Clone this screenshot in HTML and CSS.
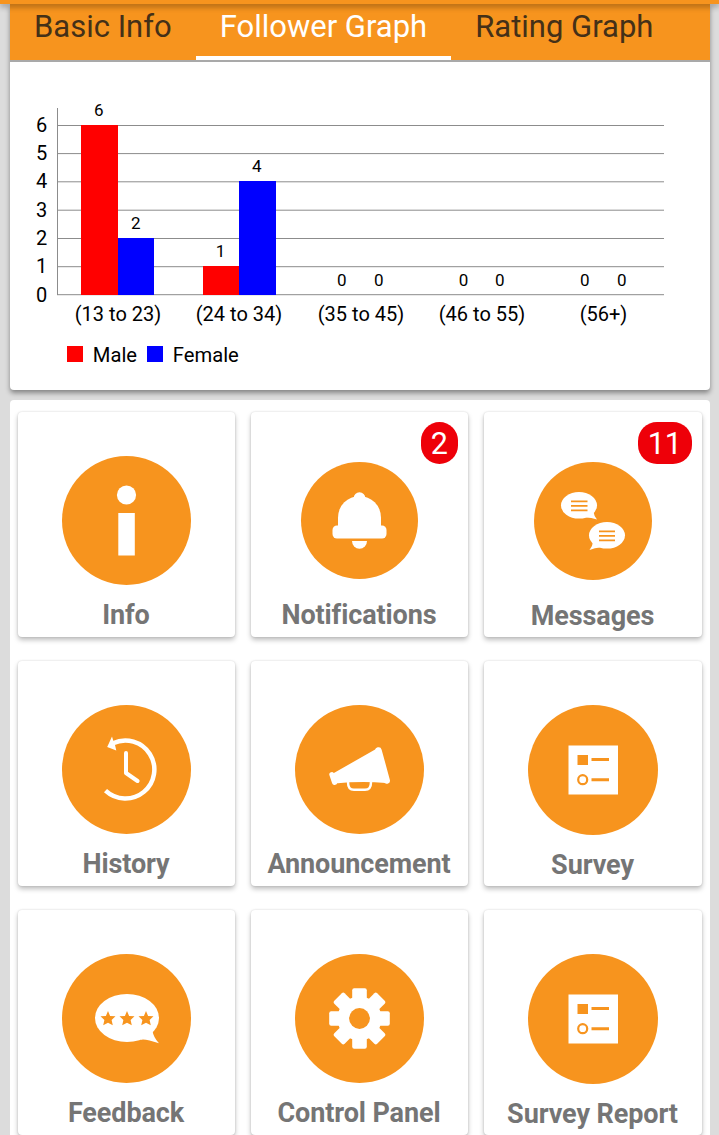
FILE: index.html
```html
<!DOCTYPE html>
<html lang="en">
<head>
    <meta charset="UTF-8">
    <meta name="viewport" content="width=device-width, initial-scale=1.0">
    <title>Dashboard</title>
    <link rel="stylesheet" href="styles.css">
</head>
<body>
    <div class="appbar"></div>
    <div class="card graph-card">
        <nav class="tabs">
            <a class="tab">Basic Info</a>
            <a class="tab active">Follower Graph</a>
            <a class="tab">Rating Graph</a>
        </nav>
        <svg class="chart" viewBox="10 62 700 328">
            <g class="grid-lines">
                <path d="M57 125.5H664M57 153.6H664M57 181.8H664M57 210.2H664M57 238.5H664M57 266.7H664"/>
                <path d="M57.5 108V295M57 294.7H664"/>
            </g>
            <g class="male">
                <rect x="81" y="125" width="37" height="170"/>
                <rect x="203" y="266" width="36" height="29"/>
                <rect x="67" y="346" width="16" height="16"/>
            </g>
            <g class="female">
                <rect x="118" y="238" width="36" height="57"/>
                <rect x="239" y="181" width="37" height="114"/>
                <rect x="147" y="346" width="16" height="16"/>
            </g>
            <g class="axis">
                <text x="47.3" y="131.5">6</text>
                <text x="47.3" y="159.5">5</text>
                <text x="47.3" y="187.5">4</text>
                <text x="47.3" y="216.5">3</text>
                <text x="47.3" y="244.5">2</text>
                <text x="47.3" y="272.5">1</text>
                <text x="47.3" y="301.5">0</text>
            </g>
            <g class="values">
                <text x="98.7" y="116">6</text>
                <text x="135.7" y="229">2</text>
                <text x="220.5" y="257">1</text>
                <text x="256.7" y="172">4</text>
                <text x="341.7" y="286">0</text>
                <text x="378.7" y="286">0</text>
                <text x="463.5" y="286">0</text>
                <text x="499.7" y="286">0</text>
                <text x="584.7" y="286">0</text>
                <text x="621.7" y="286">0</text>
            </g>
            <g class="groups">
                <text x="118" y="321">(13 to 23)</text>
                <text x="239" y="321">(24 to 34)</text>
                <text x="361" y="321">(35 to 45)</text>
                <text x="482" y="321">(46 to 55)</text>
                <text x="603.5" y="321">(56+)</text>
            </g>
            <g class="legend">
                <text x="92.8" y="362">Male</text>
                <text x="172.8" y="362">Female</text>
            </g>
        </svg>
    </div>

    <div class="card menu">
        <div class="tile">
            <svg class="icon" viewBox="0 0 130 130">
                <circle class="disc" cx="64.5" cy="64.5" r="64.5"/>
                <circle cx="64.5" cy="39" r="9.6"/>
                <rect x="56.3" y="57" width="16.5" height="42.5"/>
            </svg>
            <span class="label">Info</span>
        </div>
        <div class="tile">
            <span class="badge">2</span>
            <svg class="icon" viewBox="0 0 130 130">
                <circle class="disc" cx="64.5" cy="64.5" r="58.5"/>
                <circle cx="64.5" cy="42" r="5.8"/>
                <path d="M43 72V61.5a21.5 21.5 0 0 1 43 0V72z"/>
                <rect x="37.5" y="69.5" width="54" height="13" rx="4.5"/>
                <path d="M57 85h15a7.5 7.8 0 0 1-15 0z"/>
            </svg>
            <span class="label">Notifications</span>
        </div>
        <div class="tile">
            <span class="badge">11</span>
            <svg class="icon" viewBox="0 0 130 130">
                <circle class="disc" cx="65" cy="65" r="59"/>
                <ellipse cx="51" cy="49.3" rx="18" ry="13.3"/>
                <path d="M58 61.5Q63 61.5 69 63.5Q66 60 65.5 56z"/>
                <ellipse cx="79" cy="79.3" rx="18" ry="13.3"/>
                <path d="M72 91.5Q67 91.5 61.5 94Q64.5 90.5 65 86z"/>
                <path class="line" stroke-width="1.8" d="M43 45.3H59.5M43 49.9H59.5M43 54.3H59.5M71 75.3H87M71 79.9H87M71 84.3H87"/>
            </svg>
            <span class="label low">Messages</span>
        </div>

        <div class="tile">
            <svg class="icon" viewBox="0 0 130 130">
                <circle class="disc" cx="64.5" cy="64.5" r="64.5"/>
                <path class="stroke" stroke-width="4.5" d="M43.5 85.7A29 29 0 1 0 51 38.3"/>
                <path d="M45.2 42L50 31.5L51.5 36.5L53 40L54.3 45.5z"/>
                <path class="stroke round" stroke-width="4" d="M64 48V68L75.5 76"/>
            </svg>
            <span class="label">History</span>
        </div>
        <div class="tile">
            <svg class="icon" viewBox="0 0 130 130">
                <circle class="disc" cx="64.5" cy="64.5" r="64.5"/>
                <path d="M38 68.5L81 44L91 78Q66 76 40 78.5z"/>
                <path class="stroke round" stroke-width="5" d="M36.8 69.5L39.5 77.5"/>
                <path class="stroke round" stroke-width="6.5" d="M83.5 45.5L91.7 75.5"/>
                <path class="stroke" stroke-width="2.5" d="M53 77C53 83 55 84.8 59 84.8H70C74 84.8 76 83 76 77"/>
            </svg>
            <span class="label">Announcement</span>
        </div>
        <div class="tile">
            <svg class="icon" viewBox="0 0 130 130">
                <circle class="disc" cx="65" cy="65" r="65"/>
                <rect x="40.5" y="40.5" width="49.5" height="49"/>
                <rect class="disc" x="49.5" y="50" width="10.5" height="10"/>
                <circle class="line" stroke-width="2.2" cx="54.7" cy="74.7" r="4.5"/>
                <path class="line" stroke-width="3" d="M63.5 54.5H81M63.5 74.7H81"/>
            </svg>
            <span class="label low">Survey</span>
        </div>

        <div class="tile">
            <svg class="icon" viewBox="0 0 130 130">
                <defs>
                    <path id="star" d="M0-7.5L2.1-2.5L7.5-2.2L3.6 1.5L4.8 6.7L0 4.2L-4.8 6.7L-3.6 1.5L-7.5-2.2L-2.1-2.5z"/>
                </defs>
                <circle class="disc" cx="64.5" cy="64.5" r="64.5"/>
                <ellipse cx="65" cy="64" rx="32" ry="24"/>
                <path d="M78 86Q82 84 97 89.3Q91.5 83.5 90.5 77z"/>
                <use class="disc" href="#star" x="46" y="64.5"/>
                <use class="disc" href="#star" x="65" y="64.5"/>
                <use class="disc" href="#star" x="84" y="64.5"/>
            </svg>
            <span class="label">Feedback</span>
        </div>
        <div class="tile">
            <svg class="icon" viewBox="0 0 130 130">
                <defs>
                    <rect id="tooth" x="-7.3" y="-30.3" width="14.6" height="60.6" rx="2"/>
                </defs>
                <circle class="disc" cx="64.5" cy="64.5" r="64.5"/>
                <g transform="translate(64.5 64.5)">
                    <use href="#tooth"/>
                    <use href="#tooth" transform="rotate(45)"/>
                    <use href="#tooth" transform="rotate(90)"/>
                    <use href="#tooth" transform="rotate(135)"/>
                    <circle r="22"/>
                    <circle class="disc" r="10.4"/>
                </g>
            </svg>
            <span class="label">Control Panel</span>
        </div>
        <div class="tile">
            <svg class="icon" viewBox="0 0 130 130">
                <circle class="disc" cx="65" cy="65" r="65"/>
                <rect x="40.5" y="40.5" width="49.5" height="49"/>
                <rect class="disc" x="49.5" y="50" width="10.5" height="10"/>
                <circle class="line" stroke-width="2.2" cx="54.7" cy="74.7" r="4.5"/>
                <path class="line" stroke-width="3" d="M63.5 54.5H81M63.5 74.7H81"/>
            </svg>
            <span class="label low">Survey Report</span>
        </div>
    </div>
</body>
</html>
```

FILE: styles.css
```css
body {
    margin: 0;
    height: 1135px;
    overflow: hidden;
    background-color: #dcdcdc;
    font-family: Roboto, sans-serif;
}
.appbar {
    position: relative;
    z-index: 1;
    height: 4px;
    background-color: #f7941e;
    box-shadow: 0 2px 6px rgba(0, 0, 0, 0.45);
}
.card {
    width: 700px;
    margin: 0 auto 0 10px;
    background-color: #fff;
    border-radius: 4px;
}
.graph-card {
    height: 386px;
    border-radius: 0 0 4px 4px;
    box-shadow: 0 3px 5px rgba(0, 0, 0, 0.4);
}
.tabs {
    display: flex;
    height: 56px;
    background-color: #f7941e;
    border-bottom: 2px solid #a9a9a9;
}
.tab {
    box-sizing: border-box;
    height: 56px;
    padding: 0 24px;
    font-size: 31px;
    line-height: 46px;
    white-space: nowrap;
    color: #443018;
}
.tab.active {
    color: #fff;
    border-bottom: 4px solid #fff;
}
.chart {
    display: block;
    width: 700px;
    height: 328px;
    font-size: 20px;
}
.grid-lines {
    fill: none;
    stroke: #8c8c8c;
    stroke-width: 1;
}
.male {
    fill: #ff0000;
}
.female {
    fill: #0000ff;
}
.axis {
    text-anchor: end;
}
.values {
    font-size: 17px;
    text-anchor: middle;
}
.groups {
    text-anchor: middle;
}
.legend {
    font-size: 20.2px;
}
.menu {
    display: grid;
    box-sizing: border-box;
    grid-template-columns: 217px 217px 218px;
    grid-auto-rows: 225px;
    gap: 24px 16px;
    margin-top: 10px;
    padding: 12px 8px;
}
.tile {
    position: relative;
    display: flex;
    flex-direction: column;
    align-items: center;
    border-radius: 4px;
    background-color: #fff;
    box-shadow: 0 3px 5px rgba(0, 0, 0, 0.25), 0 0 2px rgba(0, 0, 0, 0.16);
}
.icon {
    width: 130px;
    height: 130px;
    margin-top: 44px;
    margin-left: 1px;
    fill: #fff;
}
.tile:nth-child(3n) .icon {
    margin-left: 0;
}
.disc {
    fill: #f7941e;
}
.line {
    fill: none;
    stroke: #f7941e;
}
.stroke {
    fill: none;
    stroke: #fff;
}
.round {
    stroke-linecap: round;
    stroke-linejoin: round;
}
.label {
    margin-top: 13px;
    margin-right: 1px;
    font-size: 27px;
    font-weight: bold;
    letter-spacing: -0.1px;
    line-height: 32px;
    color: #757575;
}
.label.low {
    margin-top: 14px;
}
.badge {
    position: absolute;
    top: 10px;
    right: 10px;
    height: 42px;
    padding: 0 10px;
    border-radius: 19px;
    background-color: #ee0009;
    color: #fff;
    font-size: 30.5px;
    line-height: 44px;
}
```
